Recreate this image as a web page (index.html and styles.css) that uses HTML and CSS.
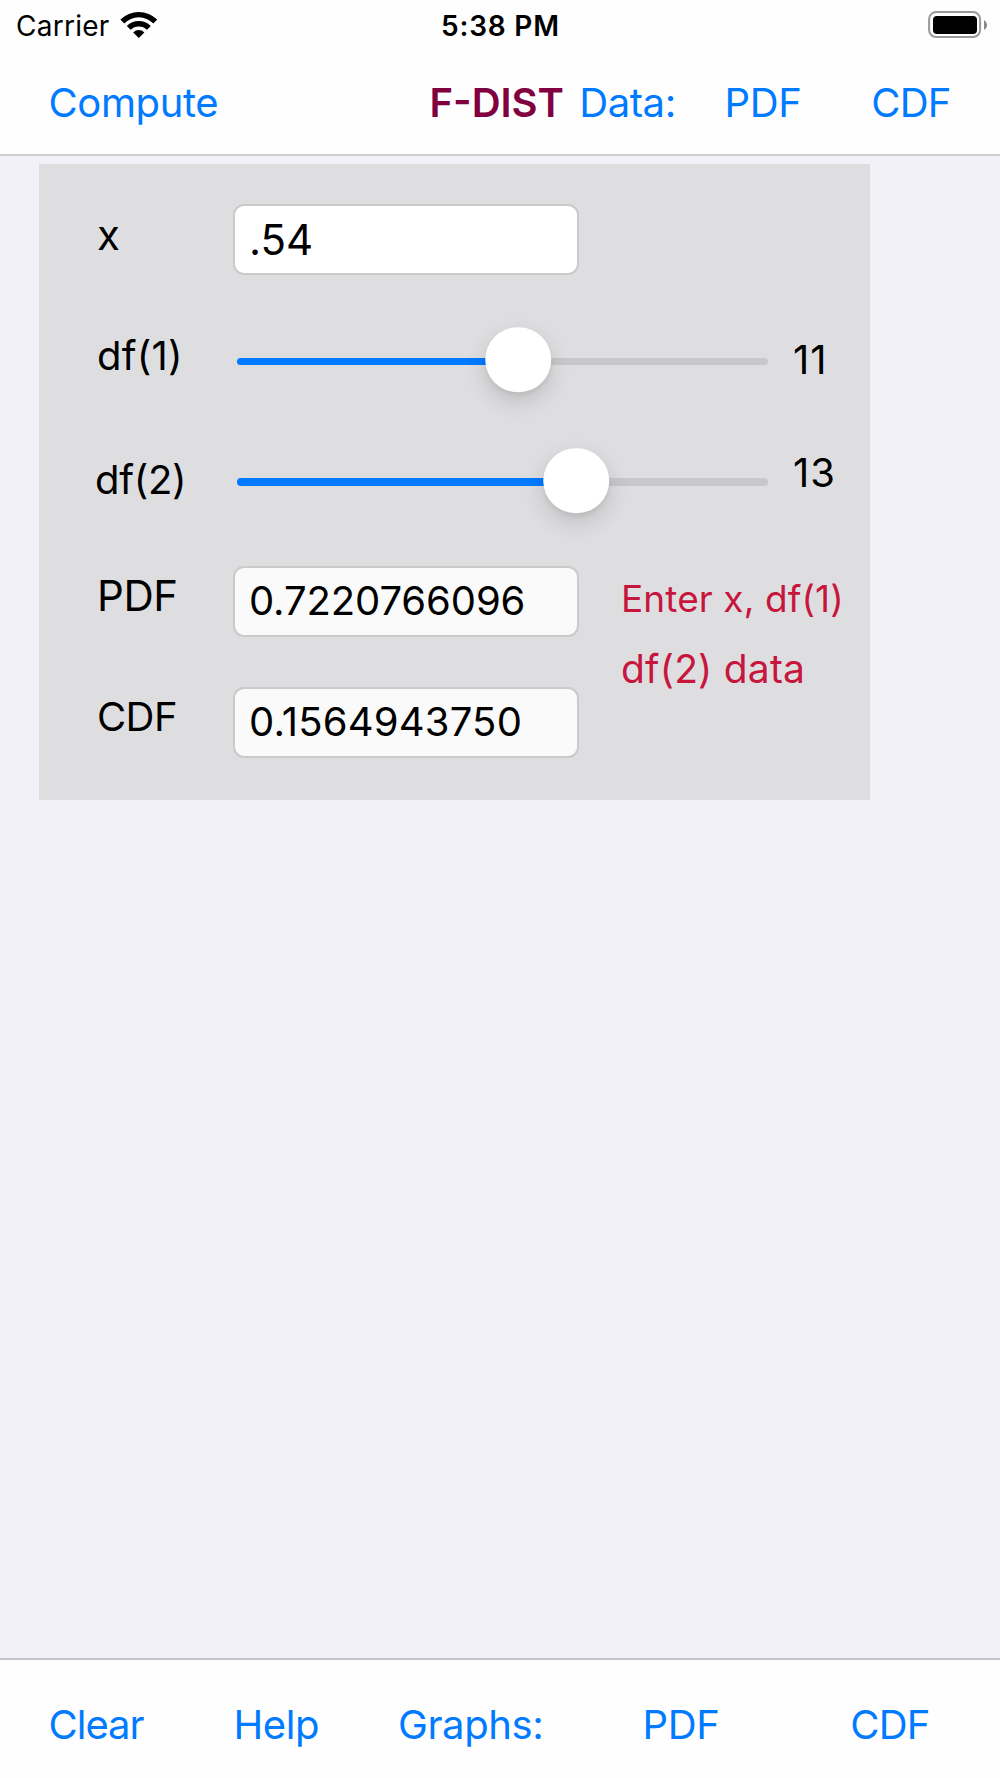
FILE: index.html
```html
<!DOCTYPE html>
<html lang="en">
<head>
<meta charset="utf-8">
<title>F-DIST</title>
<link rel="stylesheet" href="styles.css">
</head>
<body>
<div class="screen">
  <header class="header">
    <div class="status">
      <div class="status-left">
        <span class="carrier">Carrier</span>
        <svg class="wifi" width="38" height="28" viewBox="0 0 38 28">
          <path d="M.4 8.6A26.2 26.2 0 0 1 37.2 8.6L33.4 12.4A20.7 20.7 0 0 0 4.2 12.4Z"/>
          <path d="M6.8 15A17.1 17.1 0 0 1 30.8 15L27 18.8A11.6 11.6 0 0 0 10.6 18.8Z"/>
          <path d="M13.2 21.4A8 8 0 0 1 24.4 21.4L18.8 27Z"/>
        </svg>
      </div>
      <span class="time">5:38 PM</span>
      <svg class="battery" width="60" height="28" viewBox="0 0 60 28">
        <rect x="1.1" y="1.1" width="51" height="25" rx="7" fill="none" stroke="#999" stroke-width="2"/>
        <rect x="5" y="5" width="44" height="18" rx="4"/>
        <path d="M56 9Q59.2 11 59.2 14T56 19Z" fill="#888"/>
      </svg>
    </div>
    <nav class="bar bar-top">
      <a class="tight">Compute</a>
      <h1 class="title">F-DIST</h1>
      <a class="tight">Data:</a>
      <a class="tight">PDF</a>
      <a class="tighter">CDF</a>
    </nav>
  </header>

  <main class="content">
    <section class="panel">
      <div class="row">
        <label class="label label-x">x</label>
        <div class="field field-input">.54</div>
      </div>
      <div class="row">
        <label class="label label-df1">df(1)</label>
        <div class="slider"><div class="track"><div class="fill" style="width:53%"></div><div class="thumb" style="left:53%"></div></div></div>
        <output class="value">11</output>
      </div>
      <div class="row">
        <label class="label label-df2">df(2)</label>
        <div class="slider"><div class="track"><div class="fill" style="width:63.9%"></div><div class="thumb" style="left:63.9%"></div></div></div>
        <output class="value value-raised">13</output>
      </div>
      <div class="results">
        <div>
          <div class="row">
            <label class="label label-pdf">PDF</label>
            <div class="field result-pdf">0.7220766096</div>
          </div>
          <div class="row">
            <label class="label label-cdf">CDF</label>
            <div class="field result-cdf">0.1564943750</div>
          </div>
        </div>
        <div class="hint">
          <p class="hint-first">Enter x, df(1)</p>
          <p class="hint-second">df(2) data</p>
        </div>
      </div>
    </section>
  </main>

  <footer class="bar bar-bottom">
    <a class="clear">Clear</a>
    <a class="tight">Help</a>
    <a class="tight">Graphs:</a>
    <a class="tight">PDF</a>
    <a class="tighter">CDF</a>
  </footer>
</div>
</body>
</html>
```
FILE: styles.css
```css
* { box-sizing: border-box; }

body {
  margin: 0;
  font-family: Inter, "Liberation Sans", sans-serif;
  font-size: 40px;
  color: #000;
  background: #f2f1f7;
}

.screen {
  display: flex;
  flex-direction: column;
  height: 1778px;
}

.header {
  height: 156px;
  background: #fefefe;
  border-bottom: 2px solid #cdcdd0;
}

.status {
  display: grid;
  grid-template-columns: 441px 1fr 72px;
  align-items: center;
  height: 50px;
  font-size: 28px;
  line-height: 50px;
}

.status-left {
  display: flex;
  align-items: center;
  gap: 10px;
  padding-left: 16px;
}

.carrier, .time { padding-top: 1px; }
.carrier { letter-spacing: .25px; }
.wifi { margin-top: -2px; }
.time { font-weight: 600; letter-spacing: .8px; }
.battery { margin-top: -1px; }

.bar {
  display: grid;
  align-items: center;
  padding-left: 48.5px;
  color: #007aff;
  line-height: 48px;
  white-space: nowrap;
}

.bar-top {
  grid-template-columns: 381px 149.7px 145.4px 146.7px 1fr;
  height: 104px;
  padding-top: 2px;
}

.bar-bottom {
  grid-template-columns: 185px 164.5px 244.6px 207.7px 1fr;
  height: 120px;
  padding-top: 11px;
  background: #fefefe;
  border-top: 2px solid #c4c4c7;
}

.title {
  margin: 0;
  font-size: 40px;
  font-weight: 600;
  color: #800040;
}

.tight { letter-spacing: -.4px; }
.tighter { letter-spacing: -.8px; }
.clear { letter-spacing: -1px; }

.content {
  flex: 1;
  padding: 8px 0 0 39px;
}

.panel {
  width: 830.5px;
  height: 635.5px;
  padding: 15px 0 0 55px;
  background: #dedee0;
}

.row {
  display: flex;
  align-items: center;
  height: 120.75px;
}

.label {
  width: 139px;
  padding-left: 3px;
  line-height: 48px;
}

.label-x { padding-bottom: 9.5px; font-size: 42px; }
.label-df1 { padding-bottom: 9px; letter-spacing: .2px; }
.label-df2 { padding-left: 1px; padding-bottom: 1.5px; letter-spacing: -.3px; }
.label-pdf { padding-bottom: 11px; font-size: 42px; letter-spacing: -.4px; }
.label-cdf { padding-bottom: 10.5px; letter-spacing: -.6px; }

.field {
  width: 346px;
  height: 71px;
  padding-left: 14px;
  line-height: 65px;
  border: 2px solid #cacaca;
  border-radius: 11px;
  background: #fafafa;
}

.field-input { background: #fff; font-size: 42px; line-height: 67px; }
.result-pdf { letter-spacing: -.1px; }
.result-cdf { letter-spacing: .2px; }

.slider {
  width: 535px;
  padding: 2.5px 0 0 4px;
  margin-right: 25px;
}

.track {
  position: relative;
  height: 7.5px;
  border-radius: 4px;
  background: #c8c8ca;
}

.fill {
  height: 100%;
  border-radius: 4px;
  background: #007aff;
}

.thumb {
  position: absolute;
  top: 2.2px;
  width: 65.5px;
  height: 65.5px;
  border-radius: 50%;
  background: #fff;
  transform: translate(-50%, -50%);
  box-shadow: 0 9px 22px rgba(0, 0, 0, .14), 0 3px 4px rgba(0, 0, 0, .06);
}

.value { line-height: 48px; letter-spacing: 1px; }
.value-raised { padding-bottom: 15.5px; }

.results { display: flex; }

.hint {
  padding: 22.5px 0 0 42px;
  color: #c7163e;
  white-space: nowrap;
}

.hint p { margin: 0; line-height: 70px; }
.hint-first { font-size: 37px; letter-spacing: .1px; }
.hint-second { font-size: 39px; letter-spacing: .2px; }
```
